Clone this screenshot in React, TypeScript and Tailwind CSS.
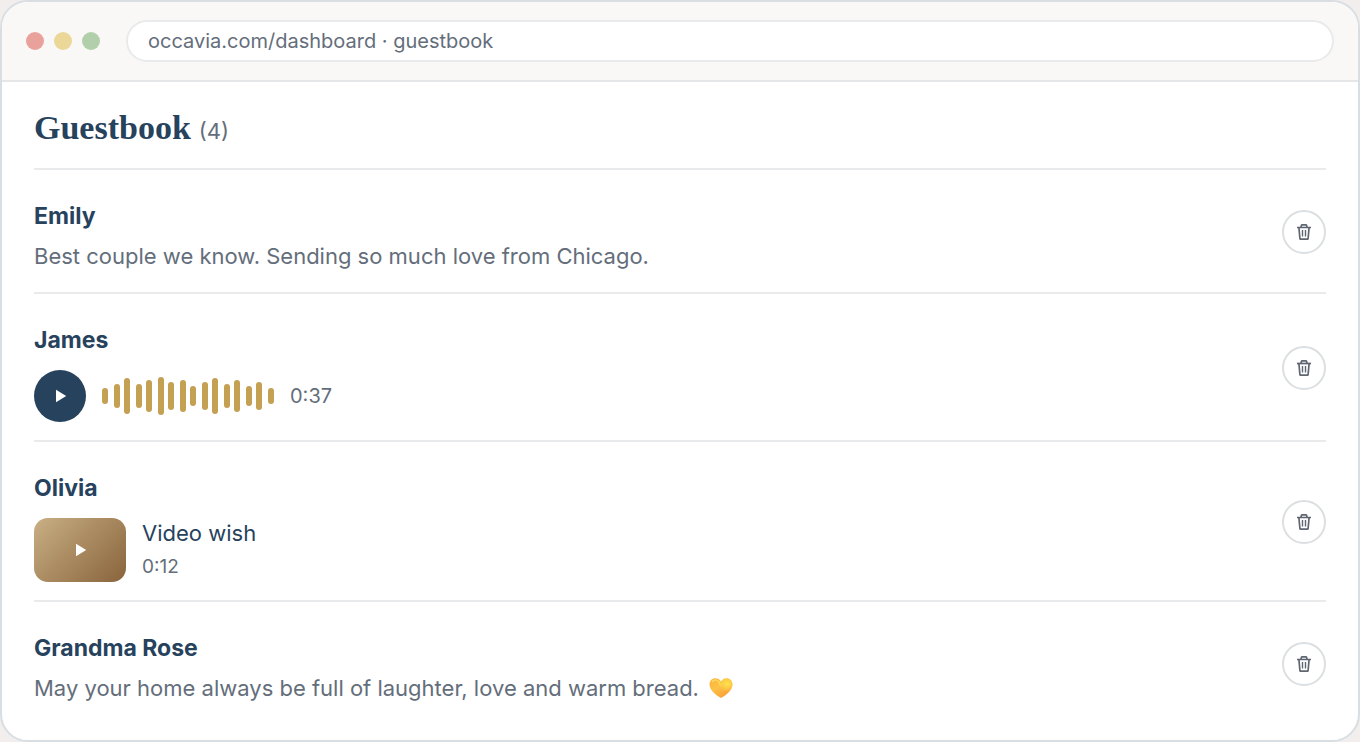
import React from "react";

interface GuestEntryProps {
  name: string;
  children: React.ReactNode;
}

const barHeights = [16, 24, 36, 24, 32, 38, 28, 32, 20, 28, 36, 24, 32, 20, 28, 16];

const TrashIcon = () => (
  <svg
    width="16"
    height="18"
    viewBox="0 0 16 18"
    fill="none"
    stroke="currentColor"
    strokeWidth="1.7"
    strokeLinejoin="round"
    aria-hidden="true"
  >
    <path d="M1 4.5h14" />
    <path d="M5 4.300l.4-1.800c.1-.4.4-.6.8-.6h3.600c.4 0 .7.2.8.6l.4 1.800" />
    <path d="M2.900 4.700l1 10.800c0 .5.3.7.8.7h6.600c.5 0 .8-.2.8-.7l1-10.800" />
    <path d="M6.500 7v6.500M9.500 7v6.500" strokeWidth="1.4" />
  </svg>
);

const PlayIcon = () => (
  <svg width="12" height="14" viewBox="0 0 12 14" fill="currentColor" aria-hidden="true">
    <path d="M1 .7l10.200 6.300L1 13.300z" />
  </svg>
);

const Waveform = () => (
  <svg width="172" height="38" viewBox="0 0 172 38" fill="#c4a052" aria-hidden="true">
    {barHeights.map((height, index) => (
      <rect
        key={index}
        x={Math.floor(index / 2) * 22 + (index % 2) * 12}
        y={19 - height / 2}
        width="6"
        height={height}
        rx="3"
      />
    ))}
  </svg>
);

const HeartIcon = () => (
  <svg width="24" height="22" viewBox="0 0 24 22" role="img" aria-label="Yellow heart">
    <defs>
      <linearGradient id="heart" x1="0" y1="0" x2="0.8" y2="1">
        <stop offset="0" stopColor="#fbb040" />
        <stop offset="0.45" stopColor="#fcc245" />
        <stop offset="1" stopColor="#fa9634" />
      </linearGradient>
      <radialGradient id="shine" cx="0.78" cy="0.3" r="0.4">
        <stop offset="0" stopColor="#fde24c" />
        <stop offset="1" stopColor="#fde24c" stopOpacity="0" />
      </radialGradient>
    </defs>
    <path
      d="M12 21C9.500 19.500.5 14.500.5 7.500.5 3.800 3 1.200 6.300 1.200c2.500 0 4.600 1.200 5.700 3.400 1.100-2.200 3.200-3.400 5.700-3.400 3.300 0 5.800 2.600 5.800 6.300 0 7-9 12-11.500 13.500z"
      fill="url(#heart)"
    />
    <path
      d="M12 21C9.500 19.500.5 14.500.5 7.500.5 3.800 3 1.200 6.300 1.200c2.500 0 4.600 1.200 5.700 3.400 1.100-2.200 3.200-3.400 5.700-3.400 3.300 0 5.800 2.600 5.800 6.300 0 7-9 12-11.500 13.500z"
      fill="url(#shine)"
    />
    <path d="M3 5c1.500-2.500 4.500-2.500 6.500-.5 1 1.200 1.800 2.500 2 4" fill="none" stroke="#fdd95a" strokeWidth="1.5" />
  </svg>
);

const GuestEntry: React.FC<GuestEntryProps> = ({ name, children }) => (
  <li className="flex items-center justify-between gap-6 border-b-2 border-[#e9eaeb] pt-5 pb-[18px] last:border-b-0">
    <div className="pt-2">
      <h2 className="text-[23px] leading-9 font-bold text-[#27425d]">{name}</h2>
      {children}
    </div>
    <button
      type="button"
      aria-label={`Delete message from ${name}`}
      className="flex size-11 shrink-0 items-center justify-center rounded-full border-2 border-[#dcdfe1] text-[#5f6672]"
    >
      <TrashIcon />
    </button>
  </li>
);

export default function App() {
  return (
    <div className="min-h-screen bg-[#f1eeed] font-['Inter',sans-serif] text-[#646e7b]">
      <div className="flex min-h-screen flex-col overflow-hidden rounded-[28px] border-2 border-[#d9dee2] bg-white">
        <header className="flex items-center gap-[26px] border-b-2 border-[#e4e6e8] bg-[#faf8f6] px-6 py-[18px]">
          <div className="flex gap-2.5">
            <span className="size-[18px] rounded-full bg-[#e8a29b]" />
            <span className="size-[18px] rounded-full bg-[#ebd798]" />
            <span className="size-[18px] rounded-full bg-[#b2cfab]" />
          </div>
          <input
            type="text"
            aria-label="Address"
            readOnly
            defaultValue="occavia.com/dashboard · guestbook"
            className="h-[42px] min-w-0 flex-1 rounded-full border-2 border-[#e9eaeb] bg-white px-5 text-[20px] outline-none"
          />
        </header>

        <main className="px-8 pb-4">
          <div className="flex items-baseline gap-2 border-b-2 border-[#e9eaeb] pt-7 pb-5">
            <h1 className="font-['Liberation_Serif',serif] text-[34px] leading-9 font-bold text-[#27425d]">
              Guestbook
            </h1>
            <span className="text-[22px]">(4)</span>
          </div>

          <ul>
            <GuestEntry name="Emily">
              <p className="mt-1 text-[22px] leading-9">
                Best couple we know. Sending so much love from Chicago.
              </p>
            </GuestEntry>

            <GuestEntry name="James">
              <div className="mt-3 flex items-center gap-4">
                <button
                  type="button"
                  aria-label="Play voice message"
                  className="flex size-[52px] items-center justify-center rounded-full bg-[#27425d] pl-0.5 text-white"
                >
                  <PlayIcon />
                </button>
                <Waveform />
                <span className="text-[20px]">0:37</span>
              </div>
            </GuestEntry>

            <GuestEntry name="Olivia">
              <div className="mt-3 flex items-center gap-4">
                <button
                  type="button"
                  aria-label="Play video wish"
                  className="flex h-16 w-[92px] items-center justify-center rounded-[14px] bg-linear-135 from-[#c9b084] to-[#89643c] pl-0.5 text-white"
                >
                  <PlayIcon />
                </button>
                <div className="flex flex-col gap-1">
                  <p className="text-[22px] leading-[30px] text-[#27425d]">Video wish</p>
                  <p className="text-[19px] leading-[30px]">0:12</p>
                </div>
              </div>
            </GuestEntry>

            <GuestEntry name="Grandma Rose">
              <p className="mt-1 flex items-center gap-2.5 text-[22px] leading-9">
                May your home always be full of laughter, love and warm bread.
                <HeartIcon />
              </p>
            </GuestEntry>
          </ul>
        </main>
      </div>
    </div>
  );
}
